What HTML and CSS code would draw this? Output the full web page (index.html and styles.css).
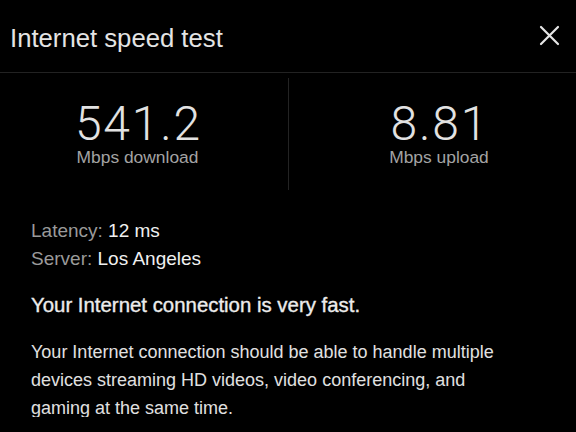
FILE: index.html
```html
<!DOCTYPE html>
<html lang="en">
<head>
<meta charset="utf-8">
<title>Internet speed test</title>
<link rel="stylesheet" href="styles.css">
</head>
<body>
<div class="dialog">
  <header class="header">
    <h1 class="title">Internet speed test</h1>
    <button class="close" aria-label="Close">
      <svg width="21" height="21" viewBox="0 0 21 21"><path d="M2 2 L19 19 M19 2 L2 19" stroke="#e6e6e6" stroke-width="2.2" stroke-linecap="round" fill="none"/></svg>
    </button>
  </header>
  <div class="body">
    <section class="stats">
      <div class="stat">
        <div class="value">541.2</div>
        <div class="label">Mbps download</div>
      </div>
      <div class="divider"></div>
      <div class="stat">
        <div class="value">8.81</div>
        <div class="label">Mbps upload</div>
      </div>
    </section>
    <section class="details">
      <div class="row"><span class="key">Latency:</span> 12 ms</div>
      <div class="row"><span class="key">Server:</span> Los Angeles</div>
      <p class="verdict">Your Internet connection is very fast.</p>
      <p class="desc">Your Internet connection should be able to handle multiple devices streaming HD videos, video conferencing, and gaming at the same time.</p>
    </section>
  </div>
</div>
</body>
</html>
```

FILE: styles.css
```css
* { box-sizing: border-box; }
html, body { margin: 0; padding: 0; background: #000; }
body { font-family: "Liberation Sans", Arial, sans-serif; color: #e6e6e6; }

.dialog { width: 576px; height: 432px; display: flex; flex-direction: column; }

.header {
  height: 73px;
  flex: none;
  border-bottom: 1px solid #222;
  display: flex;
  justify-content: space-between;
  align-items: flex-start;
  padding: 23px 16px 0 10px;
}
.title {
  margin: 0;
  font-size: 25.7px;
  font-weight: 400;
  line-height: 30px;
  color: #e4e4e4;
}
.close {
  background: none;
  border: 0;
  padding: 0;
  margin-top: 2px;
  width: 21px;
  height: 21px;
  display: block;
}
.close svg { display: block; }

.body { height: 344px; flex: none; overflow: hidden; }

.stats {
  display: grid;
  grid-template-columns: 275px 27px 1fr;
  height: 117px;
  padding-top: 5px;
}
.divider { width: 1px; background: #232323; justify-self: center; }
.stat { display: flex; flex-direction: column; align-items: center; padding-top: 24px; }
.value {
  font-family: Roboto, "Liberation Sans", sans-serif;
  font-weight: 300;
  font-size: 48px;
  line-height: 44px;
  letter-spacing: 1.8px;
  padding-left: 1.8px;
  color: #e2e2e2;
}
.label {
  font-size: 17.4px;
  line-height: 20px;
  color: #a3a3a3;
  margin-top: 1px;
}

.details { padding: 27px 55px 0 31px; }
.row { font-size: 19px; line-height: 28px; color: #f0f0f0; }
.key { color: #9a9a9a; }
.verdict {
  margin: 18px 0 0;
  font-size: 20.4px;
  line-height: 28px;
  color: #ececec;
  -webkit-text-stroke: 0.35px #ececec;
}
.desc {
  margin: 19px 0 0;
  font-size: 18px;
  line-height: 28px;
  color: #e0e0e0;
}
```
